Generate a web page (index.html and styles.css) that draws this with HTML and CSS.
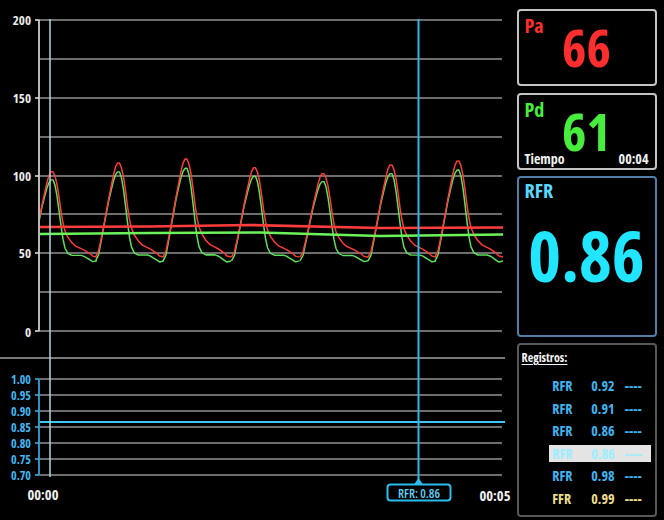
FILE: index.html
```html
<!DOCTYPE html>
<html lang="es">
<head>
<meta charset="utf-8">
<title>RFR</title>
<link rel="stylesheet" href="styles.css">
</head>
<body>
<div class="screen">
  <svg class="chart" width="516" height="520" viewBox="0 0 516 520">
    <defs>
      <clipPath id="plot"><rect x="40" y="0" width="463" height="345"/></clipPath>
      <path id="beatR" d="M-23 257 L-20 251 L-17 237 L-13 216 L-10 199 L-7 184 L-5 174 L-3 166 L-1 162 L1 162 L3 167 L5 176 L7 190 L9 206 L11 219 L13 228 L16 235 L20 241 L24 245 L28 247 L32 249 L35 251 L38 253 L41 256 L45 257"/>
      <path id="beatG" d="M-23 261 L-20 255 L-17 239 L-13 217 L-10 201 L-7 188 L-5 180 L-3 174 L-1 171 L1 171 L3 177 L5 189 L7 205 L9 222 L11 237 L13 247 L16 253 L20 255 L25 255 L29 255 L32 256 L35 258 L38 260 L41 262 L45 261"/>
    </defs>

    <g class="grid">
      <line x1="40" x2="502" y1="20" y2="20"/>
      <line x1="40" x2="502" y1="59" y2="59"/>
      <line x1="40" x2="502" y1="98" y2="98"/>
      <line x1="40" x2="502" y1="137" y2="137"/>
      <line x1="40" x2="502" y1="176" y2="176"/>
      <line x1="40" x2="502" y1="214" y2="214"/>
      <line x1="40" x2="502" y1="253" y2="253"/>
      <line x1="40" x2="502" y1="292" y2="292"/>
      <line x1="40" x2="502" y1="331" y2="331"/>
    </g>
    <path class="axis" d="M35 20 H39 V331 H35 M35 98 H39 M35 176 H39 M35 253 H39"/>
    <g class="ylab">
      <text x="31" y="20">200</text>
      <text x="31" y="98">150</text>
      <text x="31" y="176">100</text>
      <text x="31" y="253">50</text>
      <text x="31" y="332">0</text>
    </g>

    <g clip-path="url(#plot)">
      <g class="wave">
        <g transform="translate(52 259) scale(1 0.90) translate(0 -259)"><use href="#beatG" class="wg"/><use href="#beatR" class="wr"/></g>
        <g transform="translate(118.5 259) scale(1 0.99) translate(0 -259)"><use href="#beatG" class="wg"/><use href="#beatR" class="wr"/></g>
        <g transform="translate(186 259) scale(1 1.03) translate(0 -259)"><use href="#beatG" class="wg"/><use href="#beatR" class="wr"/></g>
        <g transform="translate(254.5 259) scale(1 0.94) translate(0 -259)"><use href="#beatG" class="wg"/><use href="#beatR" class="wr"/></g>
        <g transform="translate(323 259) scale(1 0.88) translate(0 -259)"><use href="#beatG" class="wg"/><use href="#beatR" class="wr"/></g>
        <g transform="translate(391 259) scale(1 0.97) translate(0 -259)"><use href="#beatG" class="wg"/><use href="#beatR" class="wr"/></g>
        <g transform="translate(458 259) scale(1 1.01) translate(0 -259)"><use href="#beatG" class="wg"/><use href="#beatR" class="wr"/></g>
      </g>
      <path class="mean-r" d="M40 227 L150 226.5 L250 225 L380 228 L503 227.5"/>
      <path class="mean-g" d="M40 234 L150 233 L260 232.5 L380 236 L503 234.5"/>
    </g>

    <line class="sep" x1="0" x2="505" y1="358" y2="358"/>

    <g class="grid">
      <line x1="40" x2="502" y1="379" y2="379"/>
      <line x1="40" x2="502" y1="395" y2="395"/>
      <line x1="40" x2="502" y1="411" y2="411"/>
      <line x1="40" x2="502" y1="427" y2="427"/>
      <line x1="40" x2="502" y1="443" y2="443"/>
      <line x1="40" x2="502" y1="459" y2="459"/>
      <line x1="40" x2="502" y1="475" y2="475"/>
    </g>
    <line class="level" x1="40" x2="505" y1="422" y2="422"/>
    <path class="axis-c" d="M35 379 H39 V475 H35 M35 395 H39 M35 411 H39 M35 427 H39 M35 443 H39 M35 459 H39"/>
    <g class="ylab-c">
      <text x="31" y="379">1.00</text>
      <text x="31" y="395">0.95</text>
      <text x="31" y="411">0.90</text>
      <text x="31" y="427">0.85</text>
      <text x="31" y="443">0.80</text>
      <text x="31" y="459">0.75</text>
      <text x="31" y="475">0.70</text>
    </g>

    <line class="cursor0" x1="50" x2="50" y1="19" y2="477"/>
    <line class="marker" x1="418.5" x2="418.5" y1="19" y2="480"/>

    <g class="badge">
      <polygon points="414,484.5 423,484.5 418.5,478"/>
      <rect x="387.5" y="484.5" width="63" height="16" rx="3"/>
      <text x="419" y="493">RFR: 0.86</text>
    </g>

    <g class="tlab">
      <text x="43" y="494.5">00:00</text>
      <text x="495" y="495">00:05</text>
    </g>
  </svg>

  <aside class="side">
    <div class="panel panel-p">
      <span class="plabel red">Pa</span>
      <span class="big red big-pa">66</span>
    </div>
    <div class="panel panel-p">
      <span class="plabel green pd-label">Pd</span>
      <span class="big green big-pd">61</span>
      <div class="time"><span>Tiempo</span><span>00:04</span></div>
    </div>
    <div class="panel panel-rfr">
      <span class="plabel rfr-label">RFR</span>
      <span class="huge">0.86</span>
    </div>
    <div class="panel panel-reg">
      <div class="reg-title">Registros:</div>
      <ul class="reg-list">
        <li class="reg-row"><span>RFR</span><span>0.92</span><span>----</span></li>
        <li class="reg-row"><span>RFR</span><span>0.91</span><span>----</span></li>
        <li class="reg-row"><span>RFR</span><span>0.86</span><span>----</span></li>
        <li class="reg-row is-selected"><span>RFR</span><span>0.86</span><span>----</span></li>
        <li class="reg-row"><span>RFR</span><span>0.98</span><span>----</span></li>
        <li class="reg-row is-ffr"><span>FFR</span><span>0.99</span><span>----</span></li>
      </ul>
    </div>
  </aside>
</div>
</body>
</html>
```

FILE: styles.css
```css
html, body {
  margin: 0;
  padding: 0;
  background: #000;
}

body {
  font-family: "Liberation Sans Narrow", "Open Sans", "Liberation Sans", sans-serif;
  font-stretch: condensed;
  color: #fff;
}

.screen {
  display: flex;
  width: 664px;
  height: 520px;
  overflow: hidden;
  background: #000;
}

.chart {
  flex: none;
  display: block;
}

/* ---------- chart ---------- */
.grid line {
  stroke: #929292;
  stroke-width: 1.5;
}

.axis {
  fill: none;
  stroke: #e6e6e6;
  stroke-width: 1.6;
}

.axis-c {
  fill: none;
  stroke: #3cb6f0;
  stroke-width: 1.6;
}

.ylab text,
.ylab-c text,
.tlab text,
.badge text {
  font-family: "Liberation Sans Narrow", "Open Sans", sans-serif;
  font-weight: 700;
  dominant-baseline: central;
}

.ylab text {
  font-size: 13px;
  fill: #ececec;
  text-anchor: end;
}

.ylab-c text {
  font-size: 12px;
  fill: #42b8f2;
  text-anchor: end;
}

.tlab text {
  font-size: 14.5px;
  fill: #f0f0f0;
  text-anchor: middle;
}

.wr,
.wg {
  fill: none;
  stroke-width: 1.5;
  stroke-linejoin: round;
  vector-effect: non-scaling-stroke;
}

.wr { stroke: #ff3a3a; }
.wg { stroke: #5ee05a; }

.mean-r,
.mean-g {
  fill: none;
  stroke-width: 2.6;
}

.mean-r { stroke: #ff3d3d; }
.mean-g { stroke: #6cf25a; }

.sep {
  stroke: #a0a0a0;
  stroke-width: 1.5;
}

.level {
  stroke: #3cc6f6;
  stroke-width: 2;
}

.cursor0 {
  stroke: #a9d9dd;
  stroke-width: 1.5;
}

.marker {
  stroke: #28b8ec;
  stroke-width: 2;
}

.badge polygon {
  fill: #2cbcf0;
}

.badge rect {
  fill: #000;
  stroke: #2cbcf0;
  stroke-width: 2;
}

.badge text {
  font-size: 12.5px;
  font-weight: 600;
  fill: #62d2f8;
  text-anchor: middle;
}

/* ---------- side panels ---------- */
.side {
  flex: none;
  width: 140px;
  margin-left: 0.5px;
  padding-top: 9.3px;
  display: flex;
  flex-direction: column;
  gap: 6.5px;
}

.panel {
  box-sizing: border-box;
  border: 2px solid #c4c4c4;
  border-radius: 4px;
}

.panel-p {
  height: 77px;
  display: grid;
  grid-template-columns: 1fr;
  grid-template-rows: 1fr;
  padding: 0 6px 0 6px;
}

.panel-p > * {
  grid-area: 1 / 1;
}

.plabel {
  font-size: 20px;
  line-height: 20px;
  font-weight: 700;
  align-self: start;
  justify-self: start;
  margin-top: 4.5px;
}

.pd-label {
  margin-top: 5.5px;
}

.red { color: #ff2e2e; }
.green { color: #47ee3e; }

.big {
  font-size: 52px;
  line-height: 52px;
  font-weight: 700;
  justify-self: center;
  align-self: start;
}

.big-pa { margin-top: 9.5px; }
.big-pd { margin-top: 10px; }

.time {
  align-self: end;
  display: flex;
  justify-content: space-between;
  font-size: 14px;
  line-height: 14px;
  font-weight: 700;
  color: #f2f2f2;
  margin-bottom: 2px;
}

.panel-rfr {
  height: 160.5px;
  border-color: #4d7fa8;
  display: flex;
  flex-direction: column;
  padding: 0 6px;
}

.rfr-label {
  color: #5ad6ff;
  margin-top: 2.5px;
}

.huge {
  align-self: center;
  font-size: 70px;
  line-height: 70px;
  font-weight: 700;
  color: #22e6ff;
  margin-top: 19px;
}

.panel-reg {
  height: 173.5px;
  border-color: #585858;
  padding: 0 0 0 3px;
}

.reg-title {
  display: inline-block;
  margin-top: 5.5px;
  font-size: 12px;
  line-height: 14px;
  font-weight: 700;
  color: #f4f4f4;
  text-decoration: underline;
  text-underline-offset: 2px;
}

.reg-list {
  list-style: none;
  margin: 10px 0 0 27.3px;
  padding: 0;
  width: 102px;
  display: flex;
  flex-direction: column;
  gap: 5.5px;
}

.reg-row {
  display: flex;
  height: 17px;
  line-height: 17px;
  font-size: 14px;
  font-weight: 700;
  color: #3fb4f0;
  padding-left: 3.5px;
}

.reg-row span:nth-child(1) { width: 39px; }
.reg-row span:nth-child(2) { width: 33.5px; }

.reg-row.is-selected {
  background: #e4e4e4;
  color: #9beeff;
}

.reg-row.is-ffr {
  color: #ecdc8e;
}
```
